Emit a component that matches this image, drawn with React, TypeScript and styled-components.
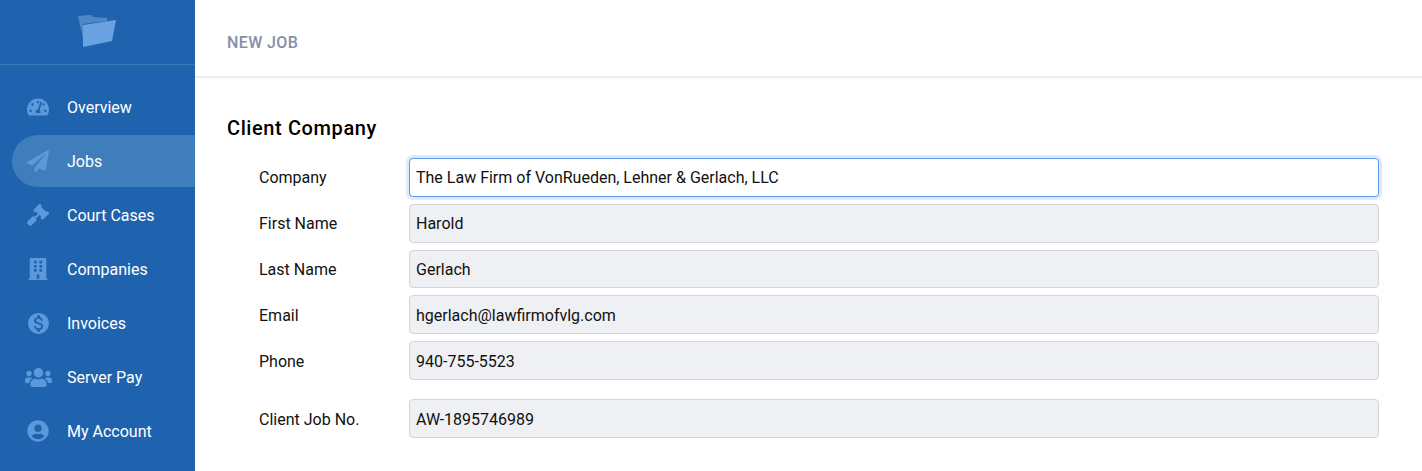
import { ReactNode } from "react";
import styled, { createGlobalStyle } from "styled-components";
import {
  FaGavel,
  FaBuilding,
  FaPaperPlane,
  FaTachometerAlt,
  FaUserCircle,
  FaUsers,
} from "react-icons/fa";
import { MdMonetizationOn } from "react-icons/md";

const GlobalStyle = createGlobalStyle`
  html, body {
    margin: 0;
    padding: 0;
    background: #fff;
    overflow: hidden;
  }
  body {
    font-family: Roboto, "Liberation Sans", sans-serif;
  }
`;

const Root = styled.div`
  display: flex;
  height: 471px;
  width: 1422px;
  overflow: hidden;
`;

const Sidebar = styled.aside`
  width: 195px;
  flex: none;
  background-color: #1f63ae;
`;

const Brand = styled.div`
  height: 65px;
  box-sizing: border-box;
  border-bottom: 1px solid #3d77b8;
  display: flex;
  align-items: flex-start;
  justify-content: center;
  padding: 14px 2px 0 0;
`;

const Nav = styled.nav`
  display: flex;
  flex-direction: column;
  gap: 2px;
  padding: 16px 0 0 12px;
`;

const NavItem = styled.div<{ $active?: boolean }>`
  height: 52px;
  display: flex;
  align-items: center;
  border-radius: 26px 0 0 26px;
  color: #fff;
  font-size: 16px;
  font-weight: 400;
  background-color: ${(p) => (p.$active ? "#407dbb" : "transparent")};
`;

const NavIcon = styled.span`
  width: 55px;
  flex: none;
  display: flex;
  justify-content: center;
  padding-right: 3px;
  box-sizing: border-box;
  color: #5b98dc;
  font-size: 22px;
`;

const Main = styled.main`
  flex: 1;
  min-width: 0;
`;

const Header = styled.header`
  height: 76px;
  border-bottom: 2px solid #eeeef2;
  display: flex;
  align-items: center;
  padding-left: 32px;
`;

const PageTitle = styled.h1`
  margin: 8px 0 0;
  font-size: 16px;
  font-weight: 500;
  letter-spacing: 0.4px;
  color: #868ea6;
`;

const Content = styled.section`
  padding: 38px 43px 0 32px;
`;

const SectionTitle = styled.h2`
  margin: 0 0 18px;
  font-size: 20px;
  line-height: 24px;
  font-weight: 500;
  letter-spacing: 0.6px;
  color: #000;
`;

const Fields = styled.div`
  display: flex;
  flex-direction: column;
  gap: 7px;
  padding-left: 32px;
`;

const Row = styled.label<{ $spaced?: boolean }>`
  display: flex;
  align-items: center;
  margin-top: ${(p) => (p.$spaced ? "12.4px" : "0")};
`;

const FieldLabel = styled.span`
  width: 150px;
  flex: none;
  font-size: 16px;
  line-height: 24px;
  padding-top: 2.1px;
  color: #111;
`;

const Input = styled.div<{ $focused?: boolean }>`
  flex: 1;
  height: 38.8px;
  box-sizing: border-box;
  padding: 7.45px 6px 0;
  font-size: 16px;
  line-height: 24px;
  color: #111;
  border-radius: 4px;
  border: 1px solid ${(p) => (p.$focused ? "#5b9ae8" : "#d3d5da")};
  background-color: ${(p) => (p.$focused ? "#fff" : "#eff0f4")};
  box-shadow: ${(p) => (p.$focused ? "0 0 0 3px #dfebfa" : "none")};
`;

function FolderLogo() {
  return (
    <svg width="38" height="34" viewBox="0 0 38 34" aria-hidden="true">
      <path d="M0 2 L13 1 L15 3 L29 4 L29 7 L5 10 L7 33 Z" fill="#5087c8" />
      <path d="M5 33 L5 11 L38 6 L34 27 Z" fill="#6ba3e2" />
    </svg>
  );
}

const navItems: { label: string; icon: ReactNode; active?: boolean }[] = [
  { label: "Overview", icon: <FaTachometerAlt /> },
  { label: "Jobs", icon: <FaPaperPlane />, active: true },
  { label: "Court Cases", icon: <FaGavel /> },
  { label: "Companies", icon: <FaBuilding /> },
  { label: "Invoices", icon: <MdMonetizationOn size={25} /> },
  { label: "Server Pay", icon: <FaUsers size={27} /> },
  { label: "My Account", icon: <FaUserCircle /> },
];

const fields = [
  { label: "Company", value: "The Law Firm of VonRueden, Lehner & Gerlach, LLC", focused: true },
  { label: "First Name", value: "Harold" },
  { label: "Last Name", value: "Gerlach" },
  { label: "Email", value: "hgerlach@lawfirmofvlg.com" },
  { label: "Phone", value: "940-755-5523" },
  { label: "Client Job No.", value: "AW-1895746989", spaced: true },
];

export default function App() {
  return (
    <Root>
      <GlobalStyle />
      <Sidebar>
        <Brand>
          <FolderLogo />
        </Brand>
        <Nav>
          {navItems.map((item) => (
            <NavItem key={item.label} $active={item.active}>
              <NavIcon>{item.icon}</NavIcon>
              {item.label}
            </NavItem>
          ))}
        </Nav>
      </Sidebar>
      <Main>
        <Header>
          <PageTitle>NEW JOB</PageTitle>
        </Header>
        <Content>
          <SectionTitle>Client Company</SectionTitle>
          <Fields>
            {fields.map((f) => (
              <Row key={f.label} $spaced={f.spaced}>
                <FieldLabel>{f.label}</FieldLabel>
                <Input $focused={f.focused}>{f.value}</Input>
              </Row>
            ))}
          </Fields>
        </Content>
      </Main>
    </Root>
  );
}
